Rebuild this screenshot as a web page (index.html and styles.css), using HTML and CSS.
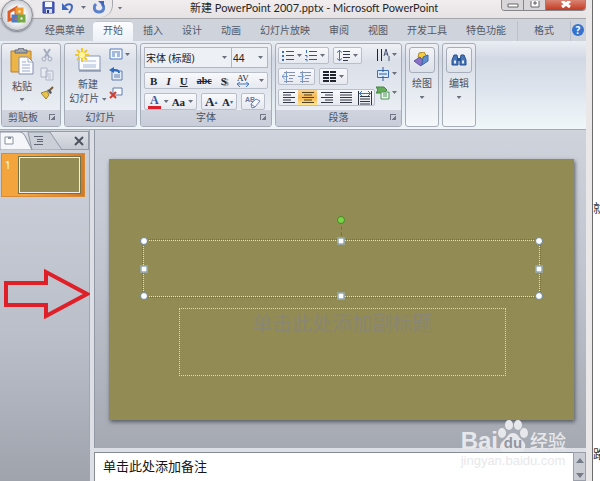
FILE: index.html
```html
<!DOCTYPE html>
<html lang="zh-CN">
<head>
<meta charset="utf-8">
<title>新建 PowerPoint 2007.pptx - Microsoft PowerPoint</title>
<link rel="stylesheet" href="styles.css">
</head>
<body>
<div class="window">
  <header class="titlebar">
    <div class="quick">
      <button aria-label="保存"><svg width="13" height="13" viewBox="0 0 13 13"><path d="M1 1h11v11H1z" fill="#4a5fc0" stroke="#303f93"/><path d="M3 1h7v5H3z" fill="#f3f6ff"/><path d="M4 8h6v4H4z" fill="#d8def2"/><path d="M5 9h2v3H5z" fill="#27377f"/></svg></button>
      <button aria-label="撤消"><svg width="12" height="13" viewBox="0 0 12 13"><path d="M3 5C6 2 10 3 10 6c0 3-1 4-3 6" fill="none" stroke="#3f67bd" stroke-width="2"/><path d="M0 2v7h7z" fill="#3f67bd"/></svg></button>
      <i class="caret"></i>
      <button aria-label="恢复"><svg width="12" height="13" viewBox="0 0 12 13"><path d="M3 3C0 6 1 11 6 11s6-5 3-8" fill="none" stroke="#5a80cb" stroke-width="3"/><path d="M5 0h6v6z" fill="#3f67bd"/></svg></button>
    </div>
    <button class="customize" aria-label="自定义"><i class="caret"></i></button>
    <h1>新建 PowerPoint 2007.pptx - Microsoft PowerPoint</h1>
    <div class="controls">
      <button aria-label="最小化"><svg width="12" height="6"><path d="M1 2h10v3H1z" fill="#fff" stroke="#666"/></svg></button>
      <button aria-label="还原"><svg width="10" height="8"><path d="M1 0v6h8V0M4 1h2v2H4z" fill="#fff" stroke="#666"/></svg></button>
      <button class="close" aria-label="关闭"><svg width="12" height="8"><path d="M2 0l8 6M10 0L2 6" stroke="#fff" stroke-width="3"/></svg></button>
    </div>
  </header>
  <button class="orb" aria-label="Office 按钮"><svg width="20" height="20" viewBox="0 0 20 20"><g fill="none" stroke-width="3"><path d="M2 7l7-4v10l-7 2z" stroke="#dd5b25"/><path d="M10 4h5v5h-5z" stroke="#f09b2e"/><path d="M6 11h5v5H6z" stroke="#4c7cc7"/><path d="M12 11h5v5h-5z" stroke="#76a944"/></g></svg></button>

  <nav class="tabs">
    <a href="#">经典菜单</a><a href="#" class="active">开始</a><a href="#">插入</a><a href="#">设计</a><a href="#">动画</a><a href="#">幻灯片放映</a><a href="#">审阅</a><a href="#">视图</a><a href="#">开发工具</a><a href="#">特色功能</a><a href="#" class="context">格式</a>
    <button class="help" aria-label="帮助">?</button>
  </nav>

  <div class="ribbon">
    <section class="group clipboard">
      <div class="body">
        <button class="large"><svg width="24" height="27" viewBox="0 0 24 27"><path d="M1 3h20v21H1z" fill="#edb447" stroke="#b9802c"/><path d="M5 5V2h3l1-2h4l1 2h3v3z" fill="#a4a7ac" stroke="#656b77"/><path d="M9 9h9l5 5v12H9z" fill="#f8faff" stroke="#8390ac"/><path d="M18 9v5h5M12 14h4M12 17h8M12 20h8M12 23h8" fill="none" stroke="#9dabc9"/></svg><span>粘贴</span><i class="caret"></i></button>
        <div class="stack">
          <button aria-label="剪切"><svg width="14" height="14" viewBox="0 0 14 14"><path d="M4 1l5 8M10 1L5 9" stroke="#a4adbe" stroke-width="2"/><circle cx="4" cy="11" r="2" fill="none" stroke="#a4adbe"/><circle cx="10" cy="11" r="2" fill="none" stroke="#a4adbe"/></svg></button>
          <button aria-label="复制"><svg width="14" height="14" viewBox="0 0 14 14"><path d="M1 1h6v9H1zM6 4h7v9H6z" fill="#e8ebf2" stroke="#adb5c5"/><path d="M8 7h3M8 9h3M8 11h3" stroke="#b9c0cf"/></svg></button>
          <button aria-label="格式刷"><svg width="14" height="14" viewBox="0 0 14 14"><path d="M1 7l6-2 2 4-3 4z" fill="#e9c34a" stroke="#9f8231"/><path d="M7 4l3 4 2-1-2-4z" fill="#555a64"/><path d="M10 4l3-3" stroke="#775c35" stroke-width="2"/></svg></button>
        </div>
      </div>
      <footer>剪贴板<button class="launcher" aria-label="剪贴板选项"></button></footer>
    </section>

    <section class="group slides">
      <div class="body">
        <button class="large"><svg width="27" height="27" viewBox="0 0 27 27"><path d="M4 8h21v14H4z" fill="#fafcff" stroke="#8797b5"/><path d="M8 13h13M8 17h13M8 19h13" stroke="#a8b8d4"/><path d="M4 23h22" stroke="#697895"/><path d="M7 0v14M0 7h14M2 2l10 10M12 2L2 12" stroke="#f4c728" stroke-width="2"/><circle cx="7" cy="7" r="3" fill="#fff59b"/></svg><span>新建<br>幻灯片 <i class="caret"></i></span></button>
        <div class="stack">
          <button aria-label="版式"><svg width="14" height="13" viewBox="0 0 14 13"><path d="M1 1h12v10H1z" fill="#f4f8ff" stroke="#527abd"/><path d="M3 4h8M3 6h3M8 6h3M3 8h3M8 8h3" stroke="#527abd"/></svg><i class="caret"></i></button>
          <button aria-label="重设"><svg width="14" height="14" viewBox="0 0 14 14"><path d="M3 4h10v9H3z" fill="#e2ecfb" stroke="#637da9"/><path d="M5 8h6M5 10h6" stroke="#637da9"/><path d="M4 3h2c3 0 4 1 4 3" fill="none" stroke="#2f69bb" stroke-width="2"/><path d="M0 3l5-3v6z" fill="#2f69bb"/></svg></button>
          <button aria-label="删除"><svg width="14" height="14" viewBox="0 0 14 14"><path d="M4 2h9v7H4z" fill="#f7f9ff" stroke="#637da9"/><path d="M1 6l6 6M7 6l-6 6" stroke="#d13c30" stroke-width="2"/></svg></button>
        </div>
      </div>
      <footer>幻灯片</footer>
    </section>

    <section class="group font">
      <div class="body rows">
        <div class="fields">
          <label class="family"><select aria-label="字体"><option>宋体 (标题)</option></select><i class="caret"></i></label>
          <label class="size"><select aria-label="字号"><option>44</option></select><i class="caret"></i></label>
        </div>
        <div class="set wide">
          <button class="serif"><b>B</b></button><button class="serif"><b><em>I</em></b></button><button class="serif"><b><u>U</u></b></button><button class="serif small"><b><s>abc</s></b></button><button class="serif shadow"><b>S</b></button>
          <button class="serif spacing" aria-label="字符间距"><span>AV</span><svg width="14" height="5"><path d="M2 2h10M4 0L1 2l3 3M10 0l3 2-3 3" fill="none" stroke="#4577c0"/></svg></button><i class="caret"></i>
        </div>
        <div class="line">
          <div class="set case"><button class="serif fore"><b>A</b></button><i class="caret"></i><button class="serif"><b>Aa</b></button><i class="caret"></i></div>
          <div class="set grow"><button class="serif big"><b>A</b><sup>▴</sup></button><button class="serif"><b>A</b><sup>▾</sup></button></div>
          <div class="set"><button aria-label="清除格式"><svg width="16" height="14" viewBox="0 0 16 14"><text x="0" y="7" class="tiny">AB</text><path d="M6 9l5-5 4 2-5 6-3 1z" fill="#f8f9fd" stroke="#7185ae"/><path d="M6 9l4 3" stroke="#7185ae"/></svg></button></div>
        </div>
      </div>
      <footer>字体<button class="launcher" aria-label="字体选项"></button></footer>
    </section>

    <section class="group paragraph">
      <div class="body">
        <div class="rows lines">
          <div class="line">
            <div class="set"><button aria-label="项目符号"><svg width="12" height="12"><path d="M4 1.5h8M4 5.5h8M4 9.5h8" stroke="#48505e"/><path d="M0 2h2M0 6h2M0 10h2" stroke="#3b6ec0" stroke-width="2"/></svg></button><i class="caret"></i><button aria-label="编号"><svg width="12" height="12"><path d="M4 1.5h8M4 5.5h8M4 9.5h8" stroke="#48505e"/><path d="M1.500 0v3M0 5.500h2v2M0 9.500h2v2" fill="none" stroke="#3b6ec0"/></svg></button><i class="caret"></i></div>
            <div class="set"><button aria-label="行距"><svg width="13" height="13"><path d="M6 2.500h7M6 5.500h7M6 8.500h7M6 11.500h5" stroke="#343b48"/><path d="M2.500 1v11M0 3.500l2.500-2 2.500 2M0 9.500l2.500 2 2.500-2" fill="none" stroke="#3976c4"/></svg></button><i class="caret"></i></div>
          </div>
          <div class="line">
            <div class="set"><button aria-label="减少缩进"><svg width="13" height="12"><path d="M2 1.5h11M7 4.5h6M7 7.5h4M2 10.5h9" stroke="#8491af"/><path d="M6 5.5H0m3-3l-3 3 3 3M4.500 0v12" fill="none" stroke="#7997c6"/></svg></button><button aria-label="增加缩进"><svg width="13" height="12"><path d="M2 1.5h11M7 4.5h6M7 7.5h4M2 10.5h9" stroke="#8491af"/><path d="M0 5.5h5M3 2.500l3 3-3 3M4.500 0v12" fill="none" stroke="#7997c6"/></svg></button></div>
            <div class="set"><button aria-label="分栏"><svg width="13" height="12"><path d="M0 1h6M7 1h6M0 4h6M7 4h6M0 7h6M7 7h6M0 10h6M7 10h6" stroke="#20242c" stroke-width="2"/></svg></button><i class="caret"></i></div>
          </div>
          <div class="set align">
            <button aria-label="左对齐"><svg width="12" height="13"><path d="M0 1.5h12M0 4h8M0 6.5h12M0 9h8M0 11.500h12" stroke="#303540"/></svg></button>
            <button class="on" aria-label="居中"><svg width="12" height="13"><path d="M0 1.5h12M2 4h8M0 6.5h12M2 9h8M0 11.500h12" stroke="#50401f"/></svg></button>
            <button aria-label="右对齐"><svg width="12" height="13"><path d="M0 1.5h12M4 4h8M0 6.5h12M4 9h8M0 11.500h12" stroke="#303540"/></svg></button>
            <button aria-label="两端对齐"><svg width="12" height="13"><path d="M0 1.5h12M0 4h12M0 6.5h12M0 9h12M0 11.500h12" stroke="#303540"/></svg></button>
            <button aria-label="分散对齐"><svg width="14" height="14"><path d="M2 5.500h10M2 8h10M2 10.500h10M2 13h10M.5 0v14M13.500 0v14" stroke="#303540"/><path d="M1 2.500h12M4 0L1.500 2.500 4 5M10 0l2.500 2.500L10 5" fill="none" stroke="#3f70be"/></svg></button>
          </div>
        </div>
        <div class="stack">
          <button aria-label="文字方向"><svg width="14" height="14"><path d="M1.500 1v12M5.500 1v12" stroke="#20242c"/><path d="M8 8l2-7 2 7M9 6h3M13 8v5" fill="none" stroke="#41506f"/></svg><i class="caret"></i></button>
          <button aria-label="对齐文本"><svg width="14" height="14"><path d="M1.500 3.500h11v7h-11z" fill="#dceaff" stroke="#3e6db6"/><path d="M3 7h8M7 0v5M7 9v5" stroke="#315a9d"/></svg><i class="caret"></i></button>
          <button aria-label="SmartArt"><svg width="14" height="14"><path d="M0 1h8l3 3-3 3H0l2-3z" fill="#66ad5a" stroke="#418643"/><path d="M5 6h8v7H5z" fill="#edf7ed" stroke="#4c9158"/><path d="M7 8h4M7 10h4" stroke="#4c9158"/></svg><i class="caret"></i></button>
        </div>
      </div>
      <footer>段落<button class="launcher" aria-label="段落选项"></button></footer>
    </section>

    <button class="group collapsed"><span class="tile"><svg width="16" height="16" viewBox="0 0 16 16"><path d="M5 1l5-1 3 5-4 3-5-3z" fill="#f2ce43" stroke="#ae892a"/><path d="M0 9l6-4 3 4-2 5-3-2z" fill="#8b72c4" stroke="#5f55a0"/><path d="M9 5l5-2v6l-6 4z" fill="#6190d0" stroke="#3c66ab"/></svg></span><span>绘图</span><i class="caret"></i></button>
    <button class="group collapsed"><span class="tile"><svg width="16" height="16" viewBox="0 0 16 16"><path d="M3 3h3l1 5v5H1V8zM10 3h3l2 5v5H9V8z" fill="#4874b7" stroke="#26518f"/><path d="M6 6h4v3H6z" fill="#26518f"/><path d="M3 10h2M11 10h2" stroke="#dfecff" stroke-width="3"/></svg></span><span>编辑</span><i class="caret"></i></button>
  </div>

  <div class="workspace">
    <aside class="outline">
      <div class="panes">
        <svg width="63" height="18" viewBox="0 0 63 18"><path d="M28 0h22l12 18H32z" fill="#cbd0d8" stroke="#9299a4"/><path d="M0 0h20q3 0 5 4l7 14H0z" fill="#f4f6fa" stroke="#8d949f"/><path d="M5 5h8v7H5z" fill="#fff" stroke="#8790a0"/><path d="M8 5h3v2H8z" fill="#8790a0"/><path d="M34 4.500h9M37 7.500h6M37 9.500h6M34 12.500h9" stroke="#5f6673"/></svg>
        <button aria-label="关闭窗格"><svg width="10" height="10"><path d="M1 1l8 8M9 1L1 9" stroke="#4d535d" stroke-width="2"/></svg></button>
      </div>
      <div class="thumb"><span>1</span><div></div></div>
      <svg class="arrow" viewBox="0 0 88 52"><path d="M4 16h40V5l41 22-41 22V38H4z" fill="none" stroke="#df2029" stroke-width="4"/></svg>
    </aside>
    <main>
      <div class="canvas">
        <div class="slide">
          <div class="title">
            <i class="stem"></i><i class="spin"></i>
            <i class="h round nw"></i><i class="h n"></i><i class="h round ne"></i><i class="h w"></i><i class="h e"></i><i class="h round sw"></i><i class="h s"></i><i class="h round se"></i>
          </div>
          <div class="subtitle">单击此处添加副标题</div>
        </div>
      </div>
      <div class="notes"><p>单击此处添加备注</p><div class="scroll"><svg width="8" height="5"><path d="M4 0l4 5H0z" fill="#737b88"/></svg><svg width="8" height="5"><path d="M0 0h8L4 5z" fill="#737b88"/></svg></div></div>
    </main>
  </div>
</div>
<div class="behind"><span>就</span><span>路</span></div>
<div class="watermark">
  <div class="brand"><b>Bai</b><span class="paw"><svg width="30" height="32" viewBox="0 0 30 32"><g fill="currentColor"><ellipse cx="4" cy="13" rx="4" ry="5"/><ellipse cx="11" cy="5" rx="4" ry="5"/><ellipse cx="20" cy="5" rx="4" ry="5"/><ellipse cx="26" cy="13" rx="4" ry="5"/><path d="M15 13c5 0 5 4 9 7 6 5 3 12-3 12H8c-7 0-8-7-2-12 4-3 4-7 9-7z"/></g></svg><b>du</b></span><strong>经验</strong></div>
  <div class="site">jingyan.baidu.com</div>
</div>
</body>
</html>
```
FILE: styles.css
```css
* { box-sizing: border-box; }
body {
  margin: 0;
  height: 100vh;
  display: flex;
  position: relative;
  overflow: hidden;
  background: #fff;
  color: #4b525e;
  font: 10px/14px "Noto Sans", "Noto Sans CJK SC", sans-serif;
}
button {
  display: flex;
  align-items: center;
  justify-content: center;
  padding: 0;
  border: 0;
  background: none;
  color: inherit;
  font: inherit;
}
svg { display: block; flex: none; }
.caret {
  flex: none;
  width: 5px;
  height: 3px;
  background: #6a717d;
  clip-path: polygon(0 0, 100% 0, 50% 100%);
}
.window {
  position: relative;
  flex: 1;
  min-width: 0;
  display: flex;
  flex-direction: column;
  padding-right: 6px;
  border-right: 1px solid #6c6c6e;
  background: #eae7e9;
}

/* Title bar */
.titlebar {
  flex: none;
  height: 19px;
  display: flex;
  align-items: flex-start;
  background: linear-gradient(#f2eeef, #e6e1e3);
  border-bottom: 1px solid #a5a7ab;
}
.quick {
  height: 17px;
  display: flex;
  align-items: center;
  gap: 7px;
  margin-left: 30px;
  padding: 0 7px 2px 12px;
  border-right: 1px solid #a9a9ad;
  border-radius: 0 0 12px 0;
  background: #ece9ec;
}
.customize { width: 14px; height: 16px; }
.titlebar h1 {
  flex: 1;
  margin: 0;
  padding-left: 63px;
  color: #262626;
  font: 11px/15px Lato, "Noto Sans CJK SC", sans-serif;
  white-space: nowrap;
}
.controls {
  display: flex;
  height: 11px;
  border: 1px solid #85858a;
  border-top: 0;
  border-radius: 0 0 4px 4px;
  overflow: hidden;
}
.controls button { width: 22px; border-right: 1px solid #85858a; background: #d8d6d9; }
.controls .close { width: 39px; border: 0; background: linear-gradient(#d88473, #c43b22); }
.orb {
  position: absolute;
  left: 1px;
  top: -1px;
  width: 32px;
  height: 32px;
  border: 1px solid #8b8e96;
  border-radius: 50%;
  background: radial-gradient(#fff 30%, #d4d6dc 65%, #b1b5be);
  box-shadow: 0 1px 2px #777b84;
}

/* Tabs */
.tabs {
  flex: none;
  height: 22px;
  display: flex;
  align-items: flex-end;
  padding-left: 35px;
  background: #cfd3dc;
}
.tabs a {
  height: 20px;
  padding: 0 9px 0 10px;
  color: #525966;
  line-height: 19px;
  text-decoration: none;
  white-space: nowrap;
}
.tabs .active {
  margin-left: -1px;
  padding: 0 10px;
  border-radius: 3px 3px 0 0;
  background: linear-gradient(#fcfdfe, #edf1f7);
  box-shadow: inset 0 1px #bfc5cf;
}
.tabs .context {
  margin-left: 2px;
  padding: 0 16px;
  border: 1px solid #bbc1cb;
  border-width: 0 1px;
}
.help {
  width: 12px;
  height: 12px;
  margin: 0 2px 5px auto;
  border-radius: 50%;
  background: #3572cd;
  color: #fff;
  font-weight: bold;
}

/* Ribbon */
.ribbon {
  flex: none;
  height: 89px;
  display: flex;
  gap: 3px;
  padding: 2px 1px;
  background: linear-gradient(#e9edf4, #d3d9e4 20%, #dce2eb 50%, #f0f7fa);
  border-bottom: 1px solid #a4aab3;
}
.group {
  flex: none;
  display: flex;
  flex-direction: column;
  border: 1px solid #a7adb7;
  border-radius: 3px;
  background: linear-gradient(#eef0f5, #dbdfe8 22%, #e6eaf1 70%, #f1f5f9);
  overflow: hidden;
}
.group footer {
  position: relative;
  height: 16px;
  flex: none;
  line-height: 15px;
  text-align: center;
  background: linear-gradient(#d0d4df, #c9cdd9);
}
.launcher {
  position: absolute;
  right: 5px;
  top: 4px;
  width: 6px;
  height: 6px;
  border: 1px solid #707784;
  border-width: 1px 0 0 1px;
  background: linear-gradient(135deg, transparent 55%, #707784 55%);
}
.body { flex: 1; min-height: 0; display: flex; padding: 2px; }
.clipboard { width: 60px; }
.slides { width: 73px; }
.font { width: 132px; }
.paragraph { width: 127px; }
.clipboard footer { padding-right: 16px; }
.large { flex: 1; flex-direction: column; justify-content: flex-start; padding-top: 2px; }
.large > span { margin-top: 2px; white-space: nowrap; }
.large > .caret { margin-top: 5px; }
.large span .caret { display: inline-block; vertical-align: middle; }
.clipboard .large > span { margin-top: 4px; }
.stack {
  display: flex;
  flex-direction: column;
  align-items: flex-start;
  gap: 4px;
  padding: 1px 4px 0 0;
}
.stack button { gap: 2px; height: 15px; }
.rows { display: flex; flex-direction: column; gap: 4px; }
.font .body { padding: 3px 3px 0; }
.fields {
  height: 21px;
  flex: none;
  display: flex;
  border: 1px solid #b1b7c2;
  background: #edf0f5;
}
.fields label { display: flex; align-items: center; padding-right: 4px; }
.family { flex: 1; border-right: 1px solid #b1b7c2; }
.size { width: 35px; }
select {
  flex: 1;
  min-width: 0;
  padding: 0 1px;
  border: 0;
  appearance: none;
  background: none;
  color: #1d2027;
  font: 10px/18px "Noto Sans", "Noto Sans CJK SC", sans-serif;
}
.line { display: flex; gap: 4px; }
.set {
  height: 17px;
  display: flex;
  align-items: center;
  justify-content: space-between;
  gap: 3px;
  padding: 0 3px;
  border: 1px solid #b9bec9;
  border-radius: 2px;
  background: linear-gradient(#f8f9fc, #e6e9f0);
}
.serif {
  color: #20242b;
  font: 11px/14px "Liberation Serif", serif;
}
.small { font-size: 10px; }
.shadow { text-shadow: 2px 1px 1px #777; }
.spacing { flex-direction: column; font-size: 9px; line-height: 8px; }
.wide { padding: 0 3px 0 5px; }
.case { width: 53px; }
.grow { width: 36px; }
.fore { height: 14px; color: #36599f; border-bottom: 3px solid #d91f2b; padding: 0 2px; line-height: 10px; font-size: 12px; }
.big { font-size: 13px; }
.serif sup { color: #4268a5; font: 6px/10px "DejaVu Sans", sans-serif; }
.tiny { font: bold 7px "Liberation Sans", sans-serif; fill: #69799d; }
.paragraph .body { justify-content: space-between; padding: 3px 1px 0 2px; }
.paragraph .stack { padding: 0 3px 0 0; }
.align { gap: 0; padding: 0; }
.align button { width: 19px; height: 15px; }
.align .on { background: linear-gradient(#f9d28d, #f4b850 50%, #ffe58e); }
.collapsed {
  width: 34px;
  justify-content: flex-start;
  padding-top: 3px;
  background: linear-gradient(#eef0f5, #dbdfe8 22%, #e6eaf1 60%, #f4f8fa);
}
.tile {
  width: 26px;
  height: 26px;
  display: grid;
  place-items: center;
  margin-bottom: 3px;
  border: 1px solid #a8aeb9;
  border-radius: 3px;
  background: linear-gradient(#f3f4f8, #dce0e8);
}
.collapsed .caret { margin-top: 6px; }

/* Workspace */
.workspace {
  flex: 1;
  min-height: 0;
  display: flex;
  background: linear-gradient(#cfd3dc, #b9bec8 60%, #9ea3ac);
}
.outline {
  position: relative;
  flex: none;
  width: 90px;
  border-right: 1px solid #a1a7b1;
}
.panes {
  height: 19px;
  display: flex;
  justify-content: space-between;
  align-items: center;
  margin-top: 1px;
  padding-right: 4px;
  border: 1px solid #959ca7;
  border-left: 0;
  background: linear-gradient(#dde0e6, #c5cad3);
}
.thumb {
  display: flex;
  gap: 8px;
  height: 44px;
  margin: 3px 4px 0 1px;
  padding: 3px 4px 3px 3px;
  border: 1px solid #d88a34;
  background: linear-gradient(100deg, #f3a43c 35%, #e1872c 80%, #c97931);
  color: #fff;
}
.thumb div { flex: 1; border: 1px solid #eee; outline: 1px solid #787047; background: #938b54; }
.thumb span { line-height: 16px; }
.arrow { position: absolute; left: 2px; top: 137px; width: 88px; height: 52px; }
main {
  flex: 1;
  min-width: 0;
  display: flex;
  flex-direction: column;
  border-left: 4px solid #dce0e6;
}
.canvas {
  flex: 1;
  min-height: 0;
  display: flex;
  padding: 29px 12px 28px 14px;
  border-left: 1px solid #9299a4;
  background: linear-gradient(#cfd3dc, #bfc4ce 45%, #a5a9b2);
}
.slide {
  position: relative;
  flex: 1;
  background: #938b54;
  box-shadow: 1px 2px 4px #565a61;
}
.title {
  position: absolute;
  left: 7.3%;
  top: 31%;
  width: 85.3%;
  height: 22%;
  border: 1px dotted #dedfe0;
  outline: 1px dotted #6a7067;
}
.subtitle {
  position: absolute;
  left: 15%;
  top: 57%;
  width: 70.3%;
  height: 26%;
  border: 1px dotted #dedabf;
  color: #898674;
  font-size: 20px;
  line-height: 30px;
  text-align: center;
  white-space: nowrap;
}
.h {
  position: absolute;
  width: 7px;
  height: 7px;
  transform: translate(-50%, -50%);
  border: 1px solid #65849a;
  background: #fff;
}
.round { width: 8px; height: 8px; border-radius: 50%; }
.nw, .w, .sw { left: 0; }
.n, .s { left: 50%; }
.ne, .e, .se { left: 100%; }
.nw, .n, .ne { top: 0; }
.w, .e { top: 50%; }
.sw, .s, .se { top: 100%; }
.stem { position: absolute; left: 50%; top: -20px; height: 20px; border-left: 1px dashed #65705b; }
.spin {
  position: absolute;
  left: 50%;
  top: -21px;
  width: 8px;
  height: 8px;
  transform: translate(-50%, -50%);
  border: 1px solid #458626;
  border-radius: 50%;
  background: #7bd348;
}
.notes {
  flex: none;
  height: 33px;
  display: flex;
  border-top: 4px solid #dce0e6;
  background: #fff;
}
.notes p {
  flex: 1;
  margin: 0;
  padding-left: 8px;
  border: 1px solid #868d98;
  border-width: 1px 0 0 1px;
  color: #151515;
  font: 13px/26px "Noto Sans CJK SC", sans-serif;
}
.scroll {
  width: 13px;
  display: flex;
  flex-direction: column;
  align-items: center;
  justify-content: space-between;
  padding: 5px 0 2px;
  background: #c9ccd3;
  border: 1px solid #9aa0a9;
}

/* Document visible behind the window */
.behind {
  flex: none;
  width: 7px;
  display: flex;
  flex-direction: column;
  justify-content: space-between;
  padding: 200px 0 17px;
  overflow: hidden;
  color: #333;
  font-size: 12px;
  line-height: 18px;
}

/* Watermark */
.watermark {
  position: absolute;
  right: 34px;
  bottom: 12px;
  color: #e7e8eb;
}
.brand { display: flex; align-items: flex-end; }
.brand > b { font: bold 24px/22px "Liberation Sans", sans-serif; }
.brand strong { margin-left: 2px; font: 500 18px/24px "Noto Sans CJK SC", sans-serif; }
.paw { position: relative; }
.paw b {
  position: absolute;
  inset: auto 0 1px;
  color: #9296a0;
  font: bold 15px/16px "Liberation Sans", sans-serif;
  text-align: center;
}
.site { font: 13px/17px "Liberation Sans", sans-serif; }
```
